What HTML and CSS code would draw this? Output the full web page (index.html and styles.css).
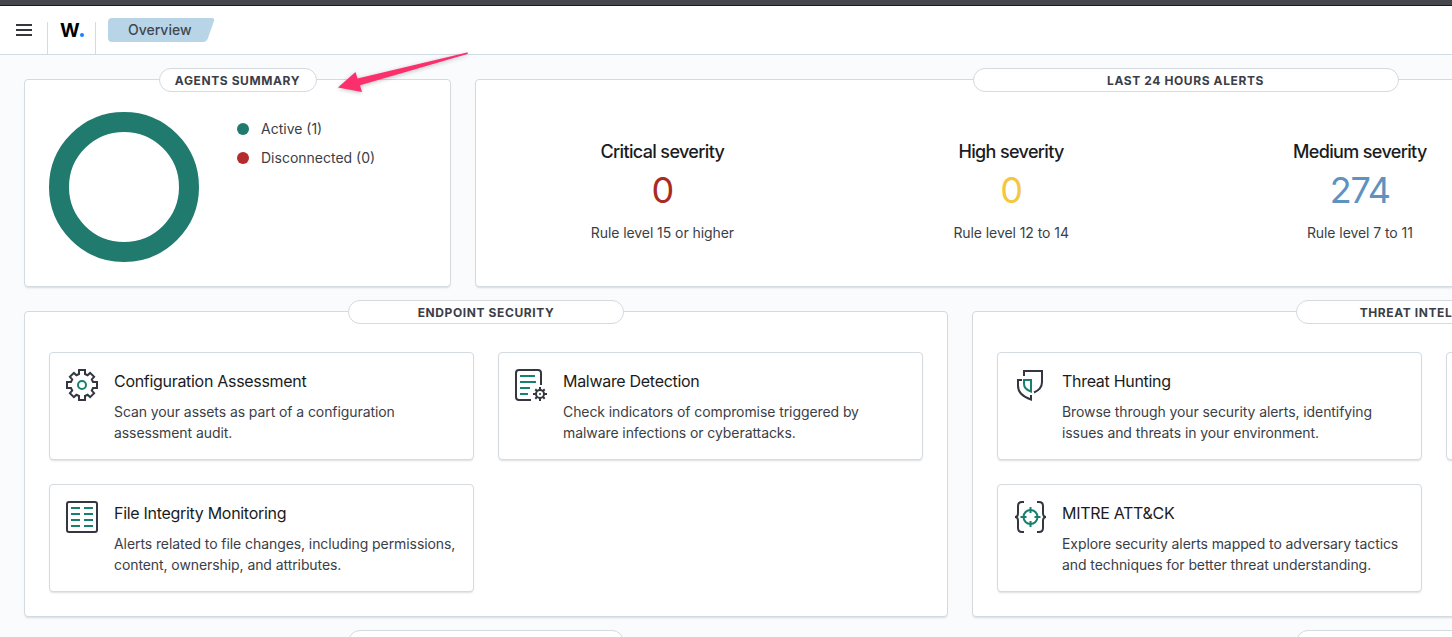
FILE: index.html
```
<!DOCTYPE html>
<html lang="en">
<head>
<meta charset="utf-8">
<title>Overview</title>
<link rel="stylesheet" href="styles.css">
</head>
<body>
<div class="frame-edge"></div>
<header class="header">
  <button class="menu" aria-label="Menu"><span></span><span></span><span></span></button>
  <div class="brand">W<i></i></div>
  <nav class="crumb"><svg width="107" height="24" viewBox="0 0 107 24"><path d="M4 0H103.500Q107 0 106 3L99.800 20.500Q98.500 24 95 24H4Q0 24 0 20V4Q0 0 4 0Z" fill="#b8d5e7"/></svg><span>Overview</span></nav>
</header>
<main class="page">
  <div class="row">
    <section class="panel agents">
      <h2 class="pill">AGENTS SUMMARY</h2>
      <div class="donut"></div>
      <ul class="legend">
        <li><b class="dot active"></b>Active (1)</li>
        <li><b class="dot gone"></b>Disconnected (0)</li>
      </ul>
    </section>
    <section class="panel alerts">
      <h2 class="pill">LAST 24 HOURS ALERTS</h2>
      <div class="stat"><h3>Critical severity</h3><p class="num red">0</p><p class="rule">Rule level 15 or higher</p></div>
      <div class="stat"><h3>High severity</h3><p class="num yellow">0</p><p class="rule">Rule level 12 to 14</p></div>
      <div class="stat"><h3>Medium severity</h3><p class="num blue">274</p><p class="rule">Rule level 7 to 11</p></div>
      <div class="stat"></div>
    </section>
  </div>
  <div class="row">
    <section class="panel group">
      <h2 class="pill">ENDPOINT SECURITY</h2>
      <article class="card">
        <svg class="icon" viewBox="0 0 32 32"><path class="d" d="M13 1H19V5L21.600 6.200L24.100 3.900L28.100 7.900L25.800 10.400L27 13H31V19H27L25.800 21.600L28.100 24.100L24.100 28.100L21.600 25.800L19 27V31H13V27L10.400 25.800L7.900 28.100L3.900 24.100L6.200 21.600L5 19H1V13H5L6.200 10.400L3.900 7.900L7.900 3.900L10.400 6.200L13 5Z"/><circle class="g" cx="16" cy="16" r="4"/></svg>
        <div><h4>Configuration Assessment</h4><p>Scan your assets as part of a configuration<br>assessment audit.</p></div>
      </article>
      <article class="card">
        <svg class="icon" viewBox="0 0 32 32"><path class="d" d="M16 31H4Q1 31 1 28V4Q1 1 4 1H23Q26 1 26 4V16"/><path class="g" d="M5 7H20M5 13H21M5 19H15M5 25H13"/><circle class="d" cx="25" cy="25" r="4"/><path class="d" d="M25 18V21M25 29V32M18 25H21M29 25H32M20.300 20.300L22 22M28 28L29.700 29.700M20.300 29.700L22 28M28 22L29.700 20.300"/><circle cx="25" cy="25" r="1" fill="#343741"/></svg>
        <div><h4>Malware Detection</h4><p>Check indicators of compromise triggered by<br>malware infections or cyberattacks.</p></div>
      </article>
      <article class="card">
        <svg class="icon" viewBox="0 0 32 32"><rect class="d" x="1" y="1" width="30" height="30" rx="2"/><path class="g" d="M5 7H14M18 7H27M5 13H14M18 13H27M5 19H14M18 19H27M5 25H14M18 25H27"/></svg>
        <div><h4>File Integrity Monitoring</h4><p>Alerts related to file changes, including permissions,<br>content, ownership, and attributes.</p></div>
      </article>
    </section>
    <section class="panel group">
      <h2 class="pill">THREAT INTELLIGENCE</h2>
      <article class="card">
        <svg class="icon" viewBox="0 0 32 32"><path class="d" d="M10 7V2H28V13Q28 20 20 23.500"/><path class="d" d="M8 11H4V17Q4 26 17 30.500V26"/><path class="g" d="M10 11H17V22.500Q10 20 10 15Z"/></svg>
        <div><h4>Threat Hunting</h4><p>Browse through your security alerts, identifying<br>issues and threats in your environment.</p></div>
      </article>
      <article class="card"></article>
      <article class="card">
        <svg class="icon" viewBox="0 0 32 32"><path class="d" d="M10 1H8Q4 1 4 5V12Q4 16 1 16Q4 16 4 20V27Q4 31 8 31H10M23 1H25Q29 1 29 5V12Q29 16 32 16Q29 16 29 20V27Q29 31 25 31H23"/><circle class="g" cx="16.500" cy="16" r="7"/><path class="g" d="M16.500 6V12M16.500 20V26M6.500 16H12.500M20.500 16H26.500"/></svg>
        <div><h4>MITRE ATT&amp;CK</h4><p>Explore security alerts mapped to adversary tactics<br>and techniques for better threat understanding.</p></div>
      </article>
    </section>
  </div>
  <div class="row">
    <section class="panel group"><h2 class="pill"></h2></section>
    <section class="panel group"><h2 class="pill"></h2></section>
  </div>
</main>
<svg class="arrow" width="150" height="60" viewBox="0 0 150 60"><path d="M137 4.500Q138.500 4 137.500 6L30 37.300L32 44L8 39.500L25.500 24L27.500 30.500Z" fill="#fb2f6c"/></svg>
</body>
</html>
```
FILE: styles.css
```
* { box-sizing: border-box; margin: 0; padding: 0; }
body { height: 637px; overflow: hidden; background: #fafbfd; color: #3b3e46; font: 14px/21px Inter, sans-serif; }
.frame-edge { height: 6px; background: #45474c; border-bottom: 1px solid #1c1824; }
.header { display: flex; height: 49px; background: #fff; border-bottom: 1px solid #d0dbe4; }
.menu { width: 47px; border: 0; background: none; display: flex; flex-direction: column; gap: 3px; padding: 18px 0 0 16px; }
.menu span { width: 16px; height: 2px; background: #343741; }
.brand { width: 49px; height: 32px; margin-top: 16px; border: solid #d0dbe4; border-width: 0 1px; color: #000; font-weight: 700; font-size: 19px; line-height: 17px; letter-spacing: -.8px; display: flex; padding-left: 12px; }
.brand i { width: 4px; height: 4px; border-radius: 50%; background: #1a80ff; margin: 11px 0 0 1px; }
.crumb { display: grid; margin: 12px 0 0 12px; height: 24px; }
.crumb > * { grid-area: 1 / 1; }
.crumb span { padding-left: 20px; line-height: 24px; font-weight: 500; color: #404752; }
.page { width: 1920px; padding: 24px; display: flex; flex-direction: column; gap: 24px; }
.row { display: flex; gap: 24px; }
.panel { position: relative; background: #fff; border: 1px solid #d3dae0; border-radius: 4px; box-shadow: 0 2px 2px -1px rgba(60, 70, 90, .18); }
.pill { position: absolute; top: -12px; left: 50%; transform: translateX(-50%); height: 24px; border: 1px solid #d3dae0; border-radius: 12px; background: #fff; font-size: 12px; line-height: 23px; font-weight: 700; letter-spacing: .6px; text-align: center; white-space: nowrap; }
.agents { width: 427px; height: 208px; padding: 32px 24px; display: flex; }
.agents .pill { width: 158px; }
.donut { width: 150px; height: 150px; border: 20px solid #207a6e; border-radius: 50%; }
.legend { list-style: none; margin: 6px 0 0 38px; }
.legend li { display: flex; align-items: center; height: 21px; margin-bottom: 8px; }
.dot { width: 12px; height: 12px; border-radius: 50%; margin-right: 12px; }
.active { background: #207a6e; }
.gone { background: #b52a2a; }
.alerts { flex: 1; height: 208px; padding: 60px 12px 0; display: flex; }
.alerts .pill { width: 426px; }
.stat { flex: 1; text-align: center; }
.stat h3 { font-size: 18px; line-height: 24px; font-weight: 500; color: #1a1c21; letter-spacing: -.65px; }
.num { font-size: 36px; line-height: 40px; margin-top: 6px; letter-spacing: -1px; }
.red { color: #a82b25; }
.yellow { color: #f3c73f; }
.blue { color: #6092c0; }
.rule { margin-top: 12px; letter-spacing: -.07px; }
.group { width: 924px; height: 306px; padding: 40px 24px; display: grid; grid-template-columns: 425px 425px; grid-auto-rows: 108px; gap: 24px; }
.group .pill { width: 276px; }
.card { border: 1px solid #d3dae0; border-radius: 4px; background: #fff; box-shadow: 0 2px 2px -1px rgba(60, 70, 90, .18); padding: 16px; display: flex; gap: 16px; }
.icon { width: 32px; height: 32px; flex: none; overflow: visible; }
.d, .g { fill: none; stroke: #343741; stroke-width: 2; }
.g { stroke: #178070; }
.card h4 { font-size: 16px; line-height: 24px; font-weight: 400; color: #1a1c21; letter-spacing: -.3px; }
.card p { margin-top: 8px; white-space: nowrap; letter-spacing: -.08px; }
.arrow { position: absolute; left: 330px; top: 48px; filter: drop-shadow(0 1px 2px rgba(0, 0, 0, .25)); }
```
